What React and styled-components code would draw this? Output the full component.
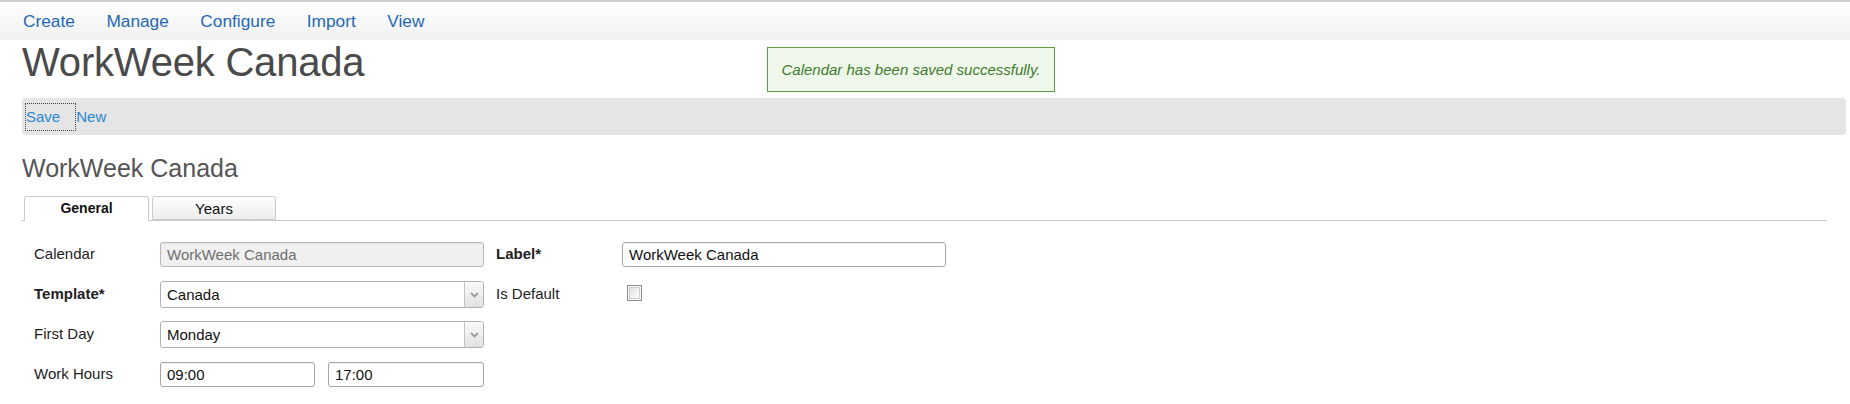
import styled, { createGlobalStyle } from "styled-components";

const GlobalStyle = createGlobalStyle`
  body {
    margin: 0;
    background: #fff;
    font-family: "Liberation Sans", Arial, sans-serif;
  }
`;

const App = () => {
  const menu = ["Create", "Manage", "Configure", "Import", "View"];

  return (
    <Page>
      <GlobalStyle />
      <TopBar>
        {menu.map((item) => (
          <MenuLink key={item} href="#">
            {item}
          </MenuLink>
        ))}
      </TopBar>

      <Content>
        <PageTitle>WorkWeek Canada</PageTitle>
        <Notice>Calendar has been saved successfully.</Notice>

        <Toolbar>
          <ToolLink href="#" $focused>
            Save
          </ToolLink>
          <ToolLink href="#">New</ToolLink>
        </Toolbar>

        <SectionTitle>WorkWeek Canada</SectionTitle>

        <TabList>
          <Tab $active>General</Tab>
          <Tab>Years</Tab>
        </TabList>

        <Form>
          <Row>
            <Field>
              <Label>Calendar</Label>
              <TextInput disabled defaultValue="WorkWeek Canada" />
            </Field>
            <Field>
              <Label $bold>Label*</Label>
              <TextInput defaultValue="WorkWeek Canada" />
            </Field>
          </Row>
          <Row>
            <Field>
              <Label $bold>Template*</Label>
              <Select>
                <SelectValue>Canada</SelectValue>
                <SelectArrow>
                  <svg width="9" height="6" viewBox="0 0 9 6">
                    <path d="M1 1 L4.5 4.5 L8 1" fill="none" stroke="#9a9a9a" strokeWidth="1.8" />
                  </svg>
                </SelectArrow>
              </Select>
            </Field>
            <Field>
              <Label>Is Default</Label>
              <Checkbox type="checkbox" />
            </Field>
          </Row>
          <Row>
            <Field>
              <Label>First Day</Label>
              <Select>
                <SelectValue>Monday</SelectValue>
                <SelectArrow>
                  <svg width="9" height="6" viewBox="0 0 9 6">
                    <path d="M1 1 L4.5 4.5 L8 1" fill="none" stroke="#9a9a9a" strokeWidth="1.8" />
                  </svg>
                </SelectArrow>
              </Select>
            </Field>
          </Row>
          <Row>
            <Field>
              <Label>Work Hours</Label>
              <HoursPair>
                <TextInput defaultValue="09:00" />
                <TextInput defaultValue="17:00" />
              </HoursPair>
            </Field>
          </Row>
        </Form>
      </Content>
    </Page>
  );
};

const Page = styled.div`
  width: 1850px;
  min-height: 404px;
  background: #fff;
`;

const TopBar = styled.nav`
  display: flex;
  align-items: center;
  height: 38px;
  padding-left: 7px;
  border-top: 2px solid #cfcfcf;
  background: linear-gradient(to bottom, #ffffff 0%, #f1f1f1 100%);
`;

const MenuLink = styled.a`
  padding: 0 15.5px 0 16px;
  font-size: 17.3px;
  color: #1f69b4;
  text-decoration: none;
`;

const Content = styled.div`
  position: relative;
  padding: 0 4px 0 22px;
`;

const PageTitle = styled.h1`
  margin: 0;
  font-size: 40px;
  line-height: 44px;
  font-weight: normal;
  color: #4a4a4a;
  letter-spacing: -0.2px;
`;

const Notice = styled.div`
  position: absolute;
  left: 767px;
  top: 7px;
  box-sizing: border-box;
  width: 288px;
  height: 45px;
  display: flex;
  align-items: center;
  justify-content: center;
  border: 1px solid #5c9a44;
  background: #eef7e9;
  color: #3f7a2e;
  font-size: 15px;
  font-style: italic;
`;

const Toolbar = styled.div`
  display: flex;
  align-items: center;
  height: 37px;
  margin-top: 14px;
  padding-left: 4px;
  background: #e5e5e5;
  border-radius: 4px;
`;

const ToolLink = styled.a`
  display: flex;
  align-items: center;
  box-sizing: border-box;
  height: 26px;
  padding-right: ${(p) => (p.$focused ? "15px" : "0")};
  margin-right: 1px;
  outline: ${(p) => (p.$focused ? "1px dotted #444" : "none")};
  font-size: 15px;
  color: #2a88d0;
  text-decoration: none;
`;

const SectionTitle = styled.h2`
  margin: 18px 0 0;
  font-size: 25px;
  line-height: 30px;
  font-weight: normal;
  color: #555;
`;

const TabList = styled.div`
  display: flex;
  align-items: flex-end;
  gap: 3px;
  margin: 13px 19px 0 0;
  padding-left: 2px;
  height: 24px;
  border-bottom: 1px solid #c8c8c8;
`;

const Tab = styled.div`
  box-sizing: border-box;
  width: ${(p) => (p.$active ? "125px" : "124px")};
  height: ${(p) => (p.$active ? "25px" : "24px")};
  margin-bottom: ${(p) => (p.$active ? "-1px" : "0")};
  display: flex;
  justify-content: center;
  padding-top: 3px;
  border: 1px solid #cccccc;
  border-bottom: ${(p) => (p.$active ? "none" : "1px solid #cccccc")};
  border-radius: 3px 3px 0 0;
  background: ${(p) =>
    p.$active ? "#fff" : "linear-gradient(to bottom, #ffffff 0%, #ececec 100%)"};
  font-size: ${(p) => (p.$active ? "14px" : "15px")};
  font-weight: ${(p) => (p.$active ? "bold" : "normal")};
  color: #111;
`;

const Form = styled.div`
  display: flex;
  flex-direction: column;
  gap: 15px;
  padding: 21px 0 0 12px;
`;

const Row = styled.div`
  display: flex;
  gap: 12px;
`;

const Field = styled.div`
  display: flex;
  align-items: center;
  height: 25px;
`;

const Label = styled.label`
  width: 126px;
  font-size: 15px;
  font-weight: ${(p) => (p.$bold ? "bold" : "normal")};
  color: #222;
  margin-top: -3px;
`;

const TextInput = styled.input`
  box-sizing: border-box;
  width: 324px;
  height: 25px;
  padding: 0 6px;
  border: 1px solid #a6a6a6;
  border-radius: 3px;
  box-shadow: inset 0 1px 1px rgba(0, 0, 0, 0.06);
  background: #fff;
  font-family: "Liberation Sans", Arial, sans-serif;
  font-size: 15px;
  color: #111;

  &:disabled {
    background: #f0f0f0;
    color: #6e6e6e;
    border-color: #b8b8b8;
  }
`;

const HoursPair = styled.div`
  display: flex;
  gap: 13px;

  ${TextInput} {
    width: 155px;
    &:last-child {
      width: 156px;
    }
  }
`;

const Select = styled.div`
  box-sizing: border-box;
  display: flex;
  width: 324px;
  height: 27px;
  border: 1px solid #b0b0b0;
  border-radius: 3px;
  background: #fff;
  overflow: hidden;
`;

const SelectValue = styled.span`
  flex: 1;
  display: flex;
  align-items: center;
  padding-left: 6px;
  font-size: 15px;
  color: #111;
`;

const SelectArrow = styled.span`
  width: 18px;
  display: flex;
  align-items: center;
  justify-content: center;
  border-left: 1px solid #c4c4c4;
  background: linear-gradient(to bottom, #fafafa 0%, #e2e2e2 100%);
`;

const Checkbox = styled.input`
  appearance: none;
  box-sizing: border-box;
  width: 15px;
  height: 16px;
  margin: -4px 0 0 5px;
  border: 1px solid #8e8e8e;
  background: linear-gradient(135deg, #d8d8d8 0%, #f4f4f4 60%, #ffffff 100%);
  box-shadow: inset 0 0 0 1px #f6f6f6, inset 0 0 0 2px #d0d0d0;
`;

export default App;
